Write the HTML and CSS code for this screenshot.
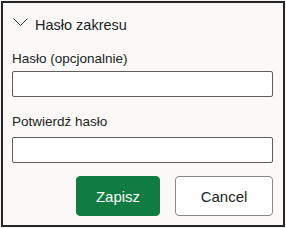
FILE: index.html
```html
<!DOCTYPE html>
<html>
	<head>
		<meta charset="utf-8">
		<title>Hasło zakresu</title>
		<link rel="stylesheet" href="styles.css">
	</head>
	<body>
		<div class="panel">
			<div class="section_head">
				<svg class="chevron" width="15" height="9" viewBox="0 0 15 9"><polyline points="0.5,0.5 7.5,7.5 14.5,0.5" fill="none" stroke="#323130" stroke-width="1"/></svg>
				<span>Hasło zakresu</span>
			</div>
			<label class="field_label" for="pwd">Hasło (opcjonalnie)</label>
			<input class="field" id="pwd" type="password">
			<label class="field_label second" for="pwd2">Potwierdź hasło</label>
			<input class="field" id="pwd2" type="password">
			<div class="actions">
				<button class="btn btn_primary" type="button">Zapisz</button>
				<button class="btn" type="button">Cancel</button>
			</div>
		</div>
	</body>
</html>
```
FILE: styles.css
```css
html,body{margin:0;padding:0;background:#f4f4f4;}
body{font-family:"Liberation Sans","Noto Sans",sans-serif;color:#201f1e;}
.panel{width:262px;height:222px;margin:1px;border:2px solid #252525;background:#faf9f8;padding:0 9px;display:flex;flex-direction:column;}
.section_head{display:flex;align-items:flex-start;height:20px;line-height:20px;margin-top:12px;font-size:14.5px;}
.chevron{margin-left:1px;margin-right:7px;margin-top:3px;}
.field_label{display:block;font-size:13.5px;line-height:18px;margin-top:15px;margin-bottom:3px;}
.field_label.second{margin-top:16px;margin-bottom:6px;}
.field{box-sizing:border-box;width:261px;height:26px;border:1px solid #605e5c;border-radius:2px;background:#fff;margin:0;padding:0 6px;outline:none;}
.actions{display:flex;justify-content:flex-end;gap:15px;margin-top:13px;padding-right:1px;}
.btn{box-sizing:border-box;height:40px;width:98px;border:1px solid #8a8886;border-radius:4px;background:#fff;color:#201f1e;font-family:inherit;font-size:15px;padding:0;cursor:pointer;}
.btn_primary{width:84px;background:#107c41;border-color:#107c41;color:#fff;}
```
